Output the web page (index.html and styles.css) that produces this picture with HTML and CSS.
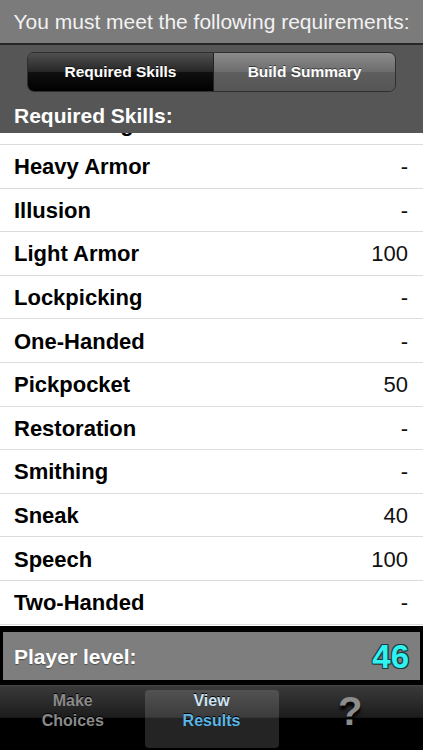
FILE: index.html
```html
<!DOCTYPE html>
<html lang="en">
<head>
    <meta charset="UTF-8">
    <meta name="viewport" content="width=device-width, initial-scale=1.0">
    <title>Build Results</title>
    <link rel="stylesheet" href="styles.css">
</head>
<body>

    <div class="app">
        <div class="header">You must meet the following requirements:</div>

        <div class="toolbar">
            <div class="segmented">
                <div class="segment selected">Required Skills</div>
                <div class="segment">Build Summary</div>
            </div>
            <h2 class="section-title">Required Skills:</h2>
        </div>

        <div class="list">
            <div class="rows">
                <div class="row"><span>Enchanting</span><span class="value">-</span></div>
                <div class="row"><span>Heavy Armor</span><span class="value">-</span></div>
                <div class="row"><span>Illusion</span><span class="value">-</span></div>
                <div class="row"><span>Light Armor</span><span class="value">100</span></div>
                <div class="row"><span>Lockpicking</span><span class="value">-</span></div>
                <div class="row"><span>One-Handed</span><span class="value">-</span></div>
                <div class="row"><span>Pickpocket</span><span class="value">50</span></div>
                <div class="row"><span>Restoration</span><span class="value">-</span></div>
                <div class="row"><span>Smithing</span><span class="value">-</span></div>
                <div class="row"><span>Sneak</span><span class="value">40</span></div>
                <div class="row"><span>Speech</span><span class="value">100</span></div>
                <div class="row"><span>Two-Handed</span><span class="value">-</span></div>
            </div>
        </div>

        <div class="player-bar">
            <div class="player-box">
                <span class="player-label">Player level:</span>
                <span class="player-level">46</span>
            </div>
        </div>

        <div class="tabbar">
            <div class="tab">
                <span>Make</span>
                <span>Choices</span>
            </div>
            <div class="tab active">
                <span class="tab-top">View</span>
                <span>Results</span>
            </div>
            <div class="tab help">
                <span class="help-mark">?</span>
            </div>
        </div>
    </div>

</body>
</html>
```

FILE: styles.css
```css
body {
    margin: 0;
    font-family: "Liberation Sans", Arial, sans-serif;
    background-color: #000;
}

.app {
    width: 423px;
    height: 750px;
    display: flex;
    flex-direction: column;
    overflow: hidden;
}

.header {
    height: 43px;
    background-color: #7b7b7b;
    border-bottom: 2px solid #262626;
    color: #f2f2f2;
    font-size: 21px;
    line-height: 44px;
    text-align: center;
    white-space: nowrap;
}

.toolbar {
    height: 88px;
    background-color: #565656;
    padding: 7px 0 0;
    box-sizing: border-box;
}

.segmented {
    display: flex;
    width: 369px;
    height: 40px;
    margin-left: 27px;
    border: 1px solid #2e2e2e;
    border-radius: 7px;
    overflow: hidden;
    box-sizing: border-box;
}

.segment {
    flex: 1;
    display: flex;
    align-items: center;
    justify-content: center;
    color: #fff;
    font-size: 15.5px;
    font-weight: bold;
    background: linear-gradient(#8c8c8c, #6c6c6c 50%, #5e5e5e 51%, #555);
    text-shadow: 0 -1px 0 rgba(0, 0, 0, 0.5);
}

.segment.selected {
    flex: 0 0 185px;
    background: linear-gradient(#505050, #262626 50%, #101010 51%, #000);
    border-right: 1px solid #222;
}

.section-title {
    margin: 0;
    padding: 9px 0 0 14px;
    color: #fff;
    font-size: 21px;
    font-weight: bold;
    line-height: 30px;
}

.list {
    flex: 1;
    background-color: #fff;
    overflow: hidden;
    border-bottom: 3px solid #000;
}

/* list is scrolled a little past the first row */
.rows {
    margin-top: -31.6px;
}

.row {
    height: 43.6px;
    display: flex;
    align-items: center;
    justify-content: space-between;
    padding: 2px 15px 0 14px;
    border-bottom: 1px solid #dcdcdc;
    box-sizing: border-box;
    font-size: 22px;
    font-weight: bold;
    color: #000;
}

.value {
    font-weight: normal;
    color: #111;
}

.player-bar {
    height: 56px;
    background-color: #000;
    padding: 3px 3px 5px 3px;
    box-sizing: border-box;
}

.player-box {
    height: 100%;
    background-color: #7e7e7e;
    display: flex;
    align-items: center;
    justify-content: space-between;
    padding: 1px 11px 0 11px;
    box-sizing: border-box;
}

.player-label {
    color: #fff;
    font-size: 21px;
    font-weight: bold;
    text-shadow: 0 1px 1px rgba(0, 0, 0, 0.4);
}

.player-level {
    color: #2ff2f2;
    font-size: 33px;
    font-weight: bold;
    text-shadow: -1px -1px 0 #1c3a3a, 1px -1px 0 #1c3a3a, -1px 1px 0 #1c3a3a, 1px 1px 0 #1c3a3a;
}

.tabbar {
    height: 65px;
    display: flex;
    padding: 4px 4px 2px;
    box-sizing: border-box;
    background: linear-gradient(#3a3a3a, #1c1c1c 49%, #000 50%, #000);
    border-top: 1px solid #444;
}

.tab {
    flex: 1;
    display: flex;
    flex-direction: column;
    align-items: center;
    justify-content: center;
    padding-bottom: 16px;
    border-radius: 4px;
    color: #8a8a8a;
    font-size: 16px;
    font-weight: bold;
    line-height: 20px;
    text-shadow: 0 -1px 0 #000;
}

.tab.active {
    flex: 0 0 134px;
    margin: 0 3px;
    background-color: rgba(255, 255, 255, 0.14);
    color: #5ab6e6;
}

.tab.active .tab-top {
    color: #cde4f2;
}

.help-mark {
    font-size: 40px;
    line-height: 40px;
    color: #8c8c8c;
    text-shadow: 0 4px 3px #000;
}
```
